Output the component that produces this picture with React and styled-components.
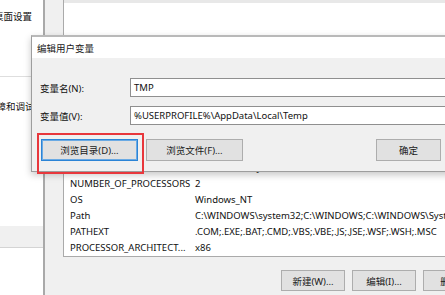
import React from "react";
import styled, { createGlobalStyle } from "styled-components";

const Global = createGlobalStyle`
  html, body { margin: 0; padding: 0; background: #fff; overflow: hidden; }
  body { font-family: "Noto Sans", "Noto Sans CJK SC", sans-serif; font-size: 9.5px; color: #111; }
  * { box-sizing: border-box; }
`;

const Desktop = styled.div`
  position: relative;
  width: 445px;
  height: 295px;
  overflow: hidden;
  background: #fff;
`;

/* far back window (system properties) */
const BackWindow = styled.div`
  position: absolute;
  left: 0;
  top: 0;
  width: 60px;
  height: 295px;
  background: #fff;
  display: flex;
  flex-direction: column;
`;

const BackText = styled.div`
  white-space: nowrap;
  margin-left: ${(p) => p.$shift}px;
  height: 16px;
  line-height: 16px;
  margin-top: ${(p) => p.$top}px;
`;

const BackRule = styled.div`
  height: 1px;
  background: #dedede;
  margin-top: ${(p) => p.$top}px;
`;

const BackBand = styled.div`
  height: 22px;
  margin-top: ${(p) => p.$top}px;
  background: #f0f0f0;
  border-bottom: 1px solid #d4d4d4;
`;

/* middle window (environment variables) */
const EnvWindow = styled.div`
  position: absolute;
  left: 43px;
  top: 0;
  width: 470px;
  height: 295px;
  background: #f0f0f0;
  border-left: 2px solid #a9a9a9;
  padding-left: 18px;
  display: flex;
  flex-direction: column;
`;

const VarList = styled.div`
  background: #fff;
  border: 1px solid #aaaaaa;
  height: 114px;
  margin-top: ${(p) => p.$top}px;
  display: flex;
  flex-direction: column;
  overflow: hidden;
`;

const VarRow = styled.div`
  display: grid;
  grid-template-columns: 125px 1fr;
  height: 16px;
  line-height: 16px;
  padding-left: 6px;
  white-space: nowrap;
  background: ${(p) => (p.$selected ? "#e8e8e8" : "transparent")};
`;

const ListButtons = styled.div`
  display: flex;
  gap: 7px;
  margin-top: 13px;
  padding-left: 218px;
`;

const WinButton = styled.div`
  width: ${(p) => p.$w}px;
  height: ${(p) => p.$h || 21}px;
  flex: none;
  background: #e1e1e1;
  border: 1px solid ${(p) => (p.$focus ? "#2b84d6" : "#adadad")};
  box-shadow: ${(p) => (p.$focus ? "inset 0 0 0 1px #6aaae4" : "none")};
  display: flex;
  align-items: center;
  justify-content: center;
  white-space: nowrap;
  color: #1a1a1a;
`;

/* front dialog */
const Dialog = styled.div`
  position: absolute;
  left: 31px;
  top: 35px;
  width: 440px;
  height: 137px;
  background: #f0f0f0;
  border: 1px solid #9d9d9d;
  border-top: 2px solid #b9b9b9;
  box-shadow: 0 3px 7px rgba(0, 0, 0, 0.22);
  display: flex;
  flex-direction: column;
`;

const TitleBar = styled.div`
  height: 21px;
  background: #fff;
  padding-left: 5px;
  display: flex;
  align-items: center;
  color: #1a1a1a;
`;

const DialogBody = styled.div`
  padding: 20px 0 0 8px;
  display: flex;
  flex-direction: column;
`;

const FieldRow = styled.div`
  display: grid;
  grid-template-columns: 90px 1fr;
  align-items: center;
  margin-bottom: ${(p) => p.$gap}px;
`;

const Label = styled.div`
  white-space: nowrap;
`;

const TextInput = styled.div`
  height: 19px;
  background: #fff;
  border: 1px solid #8f8f8f;
  padding-left: 3px;
  display: flex;
  align-items: center;
  white-space: nowrap;
`;

const DialogButtons = styled.div`
  display: flex;
  gap: 8px;
  padding-left: 1px;
  margin-top: 5px;
`;

const Spacer = styled.div`
  width: ${(p) => p.$w}px;
  flex: none;
`;

const Highlight = styled.div`
  position: absolute;
  left: 37px;
  top: 133px;
  width: 107px;
  height: 41px;
  border: 2px solid #e8373c;
  pointer-events: none;
`;

const systemVars = [
  ["ComSpec", "C:\\WINDOWS\\system32\\cmd.exe"],
  ["DriverData", "C:\\Windows\\System32\\Drivers\\DriverData"],
  ["NUMBER_OF_PROCESSORS", "2"],
  ["OS", "Windows_NT"],
  ["Path", "C:\\WINDOWS\\system32;C:\\WINDOWS;C:\\WINDOWS\\System32\\Wbem"],
  ["PATHEXT", ".COM;.EXE;.BAT;.CMD;.VBS;.VBE;.JS;.JSE;.WSF;.WSH;.MSC"],
  ["PROCESSOR_ARCHITECT...", "x86"],
];

const userVars = [
  ["TMP", "%USERPROFILE%\\AppData\\Local\\Temp", true],
];

export default function App() {
  return (
    <>
      <Global />
      <Desktop>
        <BackWindow>
          <BackText $shift={-6} $top={9}>桌面设置</BackText>
          <BackRule $top={51} />
          <BackText $shift={-13} $top={22}>故障和调试信息</BackText>
          <BackBand $top={111} />
        </BackWindow>

        <EnvWindow>
          <VarList $top={-14}>
            {userVars.map(([n, v, s]) => (
              <VarRow key={n} $selected={s}>
                <span>{n}</span>
                <span>{v}</span>
              </VarRow>
            ))}
          </VarList>
          <VarList $top={43}>
            {systemVars.map(([n, v]) => (
              <VarRow key={n}>
                <span>{n}</span>
                <span>{v}</span>
              </VarRow>
            ))}
          </VarList>
          <ListButtons>
            <WinButton $w={64}>新建(W)...</WinButton>
            <WinButton $w={64}>编辑(I)...</WinButton>
            <WinButton $w={64}>删除(L)</WinButton>
          </ListButtons>
        </EnvWindow>

        <Dialog>
          <TitleBar>编辑用户变量</TitleBar>
          <DialogBody>
            <FieldRow $gap={9}>
              <Label>变量名(N):</Label>
              <TextInput>TMP</TextInput>
            </FieldRow>
            <FieldRow $gap={9}>
              <Label>变量值(V):</Label>
              <TextInput>%USERPROFILE%\AppData\Local\Temp</TextInput>
            </FieldRow>
            <DialogButtons>
              <WinButton $w={97} $h={22} $focus>浏览目录(D)...</WinButton>
              <WinButton $w={97} $h={22}>浏览文件(F)...</WinButton>
              <Spacer $w={117} />
              <WinButton $w={65} $h={22}>确定</WinButton>
              <WinButton $w={65} $h={22}>取消</WinButton>
            </DialogButtons>
          </DialogBody>
        </Dialog>

        <Highlight />
      </Desktop>
    </>
  );
}
